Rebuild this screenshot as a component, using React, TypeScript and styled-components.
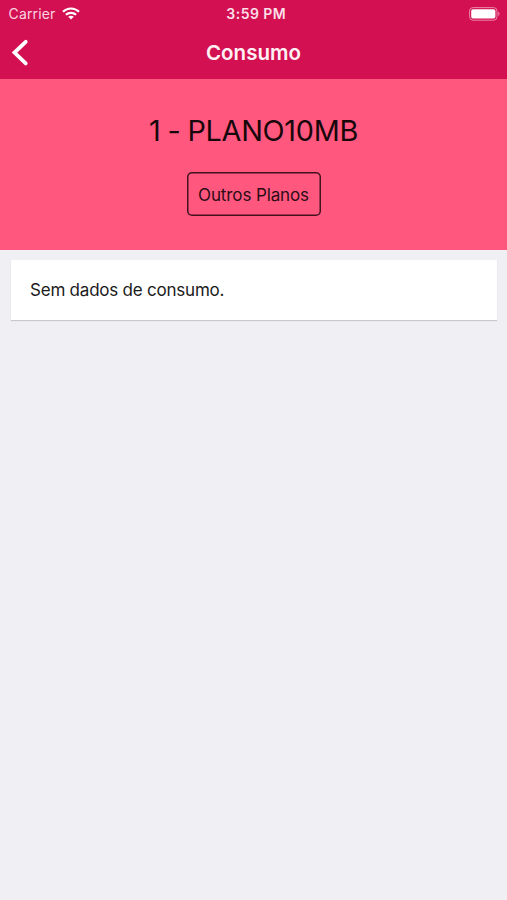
import React from "react";
import styled, { createGlobalStyle } from "styled-components";

const GlobalStyle = createGlobalStyle`
  * { box-sizing: border-box; }
  body { margin: 0; background: #efeff4; font-family: Inter, "Liberation Sans", sans-serif; }
`;
const Screen = styled.main`min-height: 900px; background: #efeff4;`;
const Header = styled.header`height: 79px; background: #d31052; color: #fff;`;
const StatusBar = styled.div`
  height: 27px;
  display: grid;
  grid-template-columns: 1fr auto 1fr;
  align-items: center;
  padding: 0 7px 0 8.5px;
  font-size: 14px;
`;
const Carrier = styled.div`display: flex; align-items: center; gap: 6.5px; color: #f9d5e1; letter-spacing: 0.15px;`;
const Clock = styled.time`
  padding-left: 4px;
  font-weight: 600;
  font-size: 14px;
  letter-spacing: 0.45px;
  color: #fbdfe8;
`;
const Battery = styled.div`display: flex; justify-content: flex-end;`;
const NavBar = styled.nav`
  height: 51px;
  display: grid;
  grid-template-columns: 40px 1fr 40px;
  align-items: center;
`;
const BackButton = styled.button`border: 0; background: none; padding: 0 0 0 11px; display: flex; color: #fff;`;
const Title = styled.h1`
  margin: 0;
  font-size: 20.5px;
  line-height: 24px;
  font-weight: 600;
  letter-spacing: 0.05px;
  text-align: center;
  color: #fff0f4;
`;
const PlanPanel = styled.section`
  height: 171px;
  background: #ff577e;
  display: flex;
  flex-direction: column;
  align-items: center;
  padding-top: 34px;
`;
const PlanName = styled.h2`
  margin: 0;
  font-size: 28.8px;
  line-height: 36px;
  font-weight: 400;
  letter-spacing: -0.27px;
  word-spacing: -0.8px;
  color: #17070b;
`;
const PlansButton = styled.button`
  margin: 23px 0 0 1px;
  width: 134px;
  height: 44px;
  border: 0;
  border-radius: 5px;
  box-shadow: inset 0 0 0 1.5px #42131f;
  background: none;
  font: 400 17px Inter, sans-serif;
  letter-spacing: -0.12px;
  padding: 1px 1px 0 0;
  color: #2a0d15;
`;
const Card = styled.section`
  margin: 10px 10px 0 11px;
  height: 60px;
  padding-left: 19px;
  display: flex;
  align-items: center;
  background: #fff;
  box-shadow: 0 1px 1px #c9c9cd;
  font-size: 17px;
  letter-spacing: -0.22px;
  color: #1b1b1b;
`;

export default function App() {
  return (
    <Screen>
      <GlobalStyle />
      <Header>
        <StatusBar>
          <Carrier>
            Carrier
            <svg width="18" height="13" viewBox="0 0 18 13" fill="none" stroke="#fff" strokeWidth="2.2">
              <path d="M1 4.8C5.5.4 12.5.4 17 4.8M3.9 7.8c2.9-2.7 7.3-2.7 10.2 0" />
              <path d="M9 12.6 6.2 9.8c1.6-1.4 4-1.4 5.6 0Z" fill="#fff" stroke="none" />
            </svg>
          </Carrier>
          <Clock>3:59 PM</Clock>
          <Battery>
            <svg width="31" height="14" viewBox="0 0 31 14">
              <rect x=".6" y=".6" width="27.4" height="12.6" rx="3.4" fill="none" stroke="#ed86a8" />
              <rect x="2.2" y="2.2" width="24.2" height="9.4" rx="1.8" fill="#fff" />
              <path d="M29.2 4.7c1.8.7 1.8 3.5 0 4.2Z" fill="#ed86a8" />
            </svg>
          </Battery>
        </StatusBar>
        <NavBar>
          <BackButton aria-label="Voltar">
            <svg
              width="18"
              height="28"
              viewBox="0 0 18 28"
              fill="none"
              stroke="currentColor"
              strokeWidth="3.8"
              strokeLinecap="round"
            >
              <path d="M14.7 2.8 3.5 13.6l11.2 10.8" />
            </svg>
          </BackButton>
          <Title>Consumo</Title>
        </NavBar>
      </Header>
      <PlanPanel>
        <PlanName>1 - PLANO10MB</PlanName>
        <PlansButton>Outros Planos</PlansButton>
      </PlanPanel>
      <Card>Sem dados de consumo.</Card>
    </Screen>
  );
}
